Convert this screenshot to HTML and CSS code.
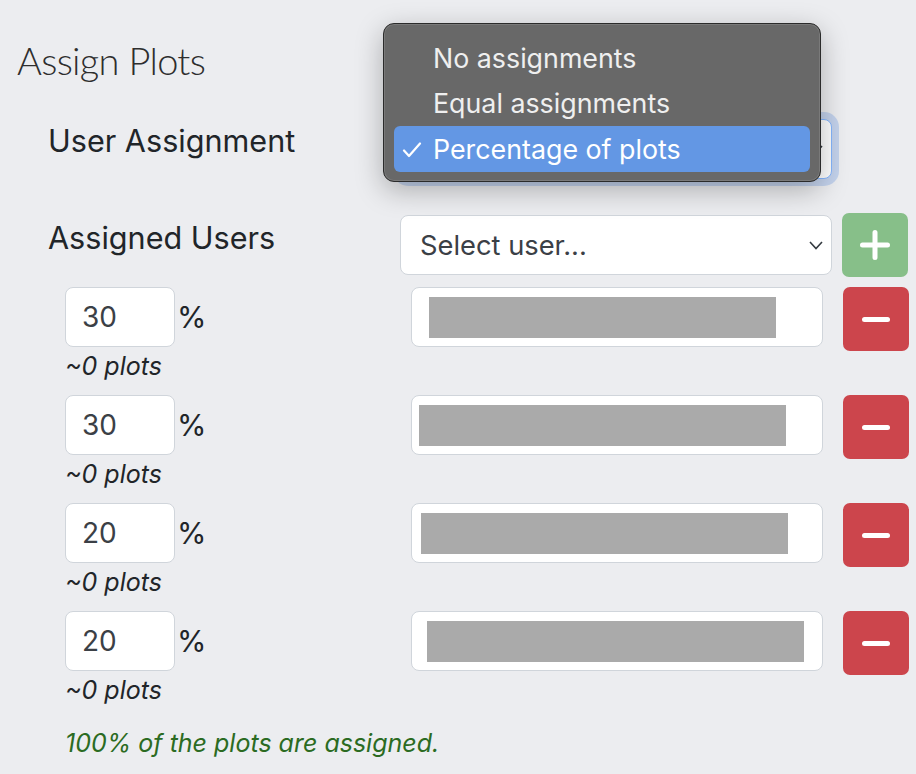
FILE: index.html
```html
<!DOCTYPE html>
<html lang="en">
<head>
<meta charset="utf-8">
<title>Assign Plots</title>
<link rel="stylesheet" href="styles.css">
</head>
<body>
<div class="page">
  <h2 class="title">Assign Plots</h2>

  <div class="field field-assign">
    <label class="field-label lbl-assign">User Assignment</label>
    <div class="select select-focus">
      <span>Percentage of plots</span>
      <svg class="chev" width="14" height="9" viewBox="0 0 14 9"><polyline points="1,1 7,7.5 13,1" fill="none" stroke="#343a40" stroke-width="1.6"/></svg>
    </div>
  </div>

  <div class="field field-users">
    <label class="field-label lbl-users">Assigned Users</label>
    <div class="select select-user">
      <span class="placeholder">Select user...</span>
      <svg class="chev" width="14" height="9" viewBox="0 0 14 9"><polyline points="1,1 7,7.5 13,1" fill="none" stroke="#343a40" stroke-width="1.6"/></svg>
    </div>
    <button class="btn btn-add" type="button">
      <svg width="30" height="30" viewBox="0 0 30 30"><path d="M15 2.5v25M2.5 15h25" stroke="#fff" stroke-width="5" stroke-linecap="round"/></svg>
    </button>
  </div>

  <div class="user-list">
    <div class="user-row">
      <div class="pct-cell">
        <div class="pct"><div class="pct-input">30</div><span class="pct-sign">%</span></div>
        <div class="plots">~0 plots</div>
      </div>
      <div class="user-input"><div class="redact redact-1"></div></div>
      <button class="btn btn-remove" type="button"><span class="minus"></span></button>
    </div>
    <div class="user-row">
      <div class="pct-cell">
        <div class="pct"><div class="pct-input">30</div><span class="pct-sign">%</span></div>
        <div class="plots">~0 plots</div>
      </div>
      <div class="user-input"><div class="redact redact-2"></div></div>
      <button class="btn btn-remove" type="button"><span class="minus"></span></button>
    </div>
    <div class="user-row">
      <div class="pct-cell">
        <div class="pct"><div class="pct-input">20</div><span class="pct-sign">%</span></div>
        <div class="plots">~0 plots</div>
      </div>
      <div class="user-input"><div class="redact redact-3"></div></div>
      <button class="btn btn-remove" type="button"><span class="minus"></span></button>
    </div>
    <div class="user-row">
      <div class="pct-cell">
        <div class="pct"><div class="pct-input">20</div><span class="pct-sign">%</span></div>
        <div class="plots">~0 plots</div>
      </div>
      <div class="user-input"><div class="redact redact-4"></div></div>
      <button class="btn btn-remove" type="button"><span class="minus"></span></button>
    </div>
  </div>

  <p class="status">100% of the plots are assigned.</p>

  <div class="dropdown">
    <div class="dd-item">No assignments</div>
    <div class="dd-item">Equal assignments</div>
    <div class="dd-item dd-selected">
      <svg class="check" width="20" height="16" viewBox="0 0 20 16"><polyline points="2,8.5 7,14 18,1.5" fill="none" stroke="#fff" stroke-width="2.2" stroke-linecap="round" stroke-linejoin="round"/></svg>
      Percentage of plots
    </div>
  </div>
</div>
</body>
</html>
```

FILE: styles.css
```css
* { box-sizing: border-box; }

body {
  margin: 0;
  background: #ecedf0;
  font-family: Inter, "Noto Sans", sans-serif;
  color: #212529;
}

.page {
  position: relative;
  width: 916px;
  height: 774px;
  overflow: hidden;
}

.title {
  margin: 0;
  height: 119px;
  padding: 38px 0 0 17px;
  font-family: Lato, "Open Sans", sans-serif;
  font-weight: 300;
  font-size: 38px;
  line-height: 44px;
  letter-spacing: -0.7px;
  color: #2e2e2e;
}

.field {
  display: grid;
  grid-template-columns: 342px 432px 66px;
  column-gap: 10px;
  padding-left: 48px;
  align-items: start;
}

.field-assign { height: 94px; }
.field-users { height: 74px; }

.field-label {
  font-size: 30.6px;
  line-height: 40px;
  color: #212529;
}

.lbl-assign { padding-top: 2px; }
.lbl-users { padding-top: 5px; }

.select {
  height: 60px;
  background: #fff;
  border: 1.5px solid #d0d5db;
  border-radius: 8px;
  padding: 0 8px 0 19px;
  display: flex;
  align-items: center;
  justify-content: space-between;
  font-size: 27.3px;
  color: #212529;
}

.select-focus {
  border-color: #86b7fe;
  box-shadow: 0 0 0 7px rgba(100, 150, 230, 0.3);
}

.select-user { margin-top: 2px; }

.placeholder { color: #3b4046; }

.chev { flex: none; }

.btn {
  width: 66px;
  height: 64px;
  border: none;
  border-radius: 7px;
  padding: 0;
  display: flex;
  align-items: center;
  justify-content: center;
}

.btn-add { background: #87bf89; }
.btn-remove { background: #cc454c; }

.minus {
  display: block;
  width: 28px;
  height: 5px;
  border-radius: 3px;
  background: #fff;
}

.user-row {
  display: grid;
  grid-template-columns: 326px 412px 66px;
  column-gap: 20px;
  padding-left: 65px;
  height: 108px;
  align-items: start;
}

.pct {
  display: flex;
  align-items: center;
}

.pct-input {
  width: 110px;
  height: 60px;
  background: #fff;
  border: 1.5px solid #d0d5db;
  border-radius: 8px;
  padding-left: 16px;
  display: flex;
  align-items: center;
  font-size: 28px;
  color: #3b4046;
}

.pct-sign {
  margin-left: 2px;
  font-size: 30px;
  color: #212529;
}

.plots {
  margin-top: 1px;
  font-style: italic;
  font-size: 25px;
  line-height: 36px;
  color: #212529;
}

.user-input {
  height: 60px;
  background: #fff;
  border: 1.5px solid #d0d5db;
  border-radius: 8px;
  display: flex;
  align-items: center;
}

.redact { height: 41px; background: #aaaaaa; }
.redact-1 { margin-left: 17px; width: 347px; }
.redact-2 { margin-left: 7px; width: 367px; }
.redact-3 { margin-left: 9px; width: 367px; }
.redact-4 { margin-left: 15px; width: 377px; }

.status {
  margin: 6px 0 0 65px;
  font-style: italic;
  font-size: 25px;
  line-height: 36px;
  color: #2b6b22;
}

.dropdown {
  position: absolute;
  left: 383px;
  top: 23px;
  width: 438px;
  height: 159px;
  padding: 11px 10px 0 10px;
  background: #686868;
  border: 1px solid #2b2b2b;
  border-radius: 11px;
  box-shadow: inset 0 0 0 1px rgba(255, 255, 255, 0.12), 0 8px 28px rgba(0, 0, 0, 0.28);
}

.dd-item {
  position: relative;
  height: 45.5px;
  padding-left: 39px;
  display: flex;
  align-items: center;
  font-size: 26.8px;
  color: #efefef;
  border-radius: 6px;
}

.dd-selected {
  background: #6397e4;
  color: #fff;
}

.check {
  position: absolute;
  left: 8px;
  top: 16px;
}
```
